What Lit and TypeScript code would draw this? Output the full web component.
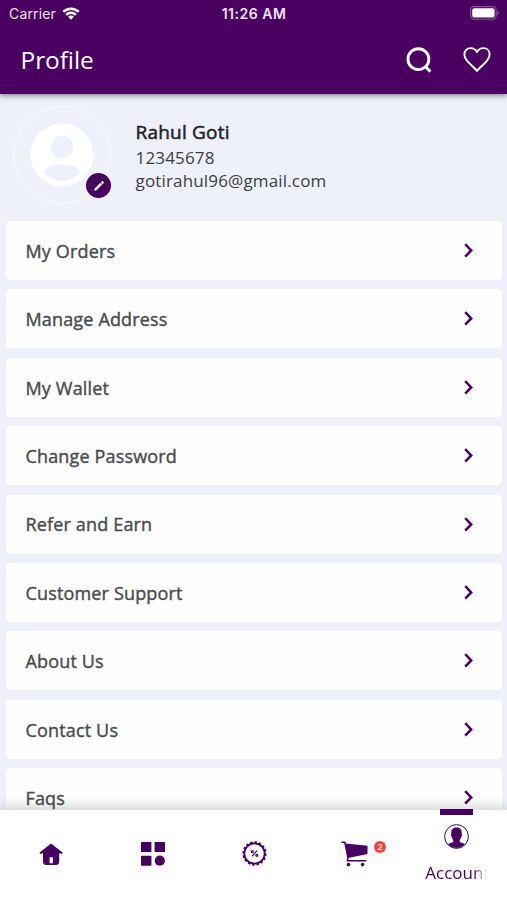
import { LitElement, html, css, svg } from "lit";
import { customElement, property } from "lit/decorators.js";

const icons = {
  wifi: svg`<path d="M0.4 4.9 A12.3 12.3 0 0 1 17.6 4.9 L15.8 6.8 A9.7 9.7 0 0 0 2.2 6.8Z"/><path d="M3.3 7.9 A8.2 8.2 0 0 1 14.7 7.9 L12.9 9.7 A5.6 5.6 0 0 0 5.1 9.7Z"/><path d="M6.1 10.8 A4.2 4.2 0 0 1 11.9 10.8 L9 13.8Z"/>`,
  battery: svg`<rect x="0.6" y="0.6" width="25.6" height="12.6" rx="3.6" fill="none" stroke="currentColor" stroke-opacity=".35" stroke-width="1.1"/><rect x="2.2" y="2.2" width="22.4" height="9.4" rx="2"/><path d="M27.6 4.8q2 2.1 0 4.2z" fill-opacity=".5"/>`,
  search: svg`<g fill="none" stroke="currentColor" stroke-width="2.9"><circle cx="12.4" cy="12.2" r="10.4"/><path d="M18.8 19 24.4 24.6"/></g>`,
  heart: svg`<path fill="none" stroke="currentColor" stroke-width="1.9" stroke-linejoin="round" d="M14 24C12.5 21.7 7.5 17.6 5 14.8C2.8 12.300 1.400 10.300 1.400 7.500C1.400 3.600 4 1.100 7.500 1.100C10.400 1.100 12.800 2.600 14 5.100C15.200 2.600 17.600 1.100 20.500 1.100C24 1.100 26.600 3.600 26.600 7.500C26.600 10.300 25.200 12.300 23 14.800C20.500 17.600 15.500 21.700 14 24Z"/>`,
  person: svg`<path fill-rule="evenodd" d="M32 0.5a31.5 31.5 0 1 0 0 63a31.5 31.5 0 1 0 0-63zM32 12.8a11.2 11.2 0 1 1 0 22.4a11.2 11.2 0 1 1 0-22.4zM14 49.5C17 38.5 47 38.5 50 49.5C41 60.5 23 60.5 14 49.5z"/>`,
  pencil: svg`<path fill="none" stroke="currentColor" stroke-width="2.500" d="M1.800 10.200 8.300 3.700M8.700 3.300 10.300 1.700"/>`,
  chevron: svg`<path fill="none" stroke="currentColor" stroke-width="2.500" d="M1.200 1.200 7.200 7.400 1.200 13.600"/>`,
  home: svg`<path fill-rule="evenodd" d="M12 0.500 23.800 9.700 23 11 20.200 10V18.500Q20.200 22 17 22H7.500Q4 22 4 18.500V10L1.200 11 0.400 9.700ZM10.600 14.200V20.200H13.900V14.200Z"/>`,
  grid: svg`<rect width="10.400" height="10" rx=".6"/><rect x="13.600" width="10.400" height="10" rx=".6"/><rect y="13.700" width="10.400" height="10" rx=".6"/><circle cx="18.800" cy="18.700" r="5.100"/>`,
  offer: svg`<circle cx="12.500" cy="12.500" r="10.200" fill="none" stroke="currentColor" stroke-width="1.800"/><circle cx="12.500" cy="12.500" r="11.200" fill="none" stroke="currentColor" stroke-width="1.900" pathLength="64" stroke-dasharray="2.200 1.800"/><path d="M10 15.300 15 9.700" stroke="currentColor" stroke-width="1.200"/><g fill="none" stroke="currentColor" stroke-width="1.200"><circle cx="10.300" cy="10.700" r="1"/><circle cx="14.800" cy="14.300" r="1"/></g>`,
  cart: svg`<path d="M4.300 2.500 26.500 4.700V13L7.200 17z"/><path fill="none" stroke="currentColor" stroke-width="1.600" stroke-linecap="round" stroke-linejoin="round" d="M1 1.200H3.800L7 16.500 6.300 19.800H24.600"/><circle cx="7.500" cy="23.600" r="1.800"/><circle cx="21.600" cy="23.600" r="1.800"/>`,
  account: svg`<circle cx="12.500" cy="12.500" r="11.900" fill="none" stroke="currentColor" stroke-width="1"/><path d="M12.500 3.600C16.600 3.600 18 5.800 17.700 10C18.300 10.400 17.900 12.900 17.100 13.100C16.800 14.700 16.300 15.600 15.700 16.200V18L21 20.100A11.400 11.400 0 0 1 4 20.100L9.300 18V16.200C8.700 15.600 8.200 14.700 7.900 13.100C7.100 12.900 6.700 10.400 7.300 10C7 5.800 8.400 3.600 12.500 3.600Z"/>`,
};

@customElement("ui-icon")
class UiIcon extends LitElement {
  @property() name: keyof typeof icons = "home";
  @property({ type: Number }) w = 24;
  @property({ type: Number }) h = 24;
  static styles = css`
    :host { display: block; flex: none; }
    svg { display: block; fill: currentColor; overflow: visible; }
  `;
  render() {
    return html`<svg width=${this.w} height=${this.h} viewBox="0 0 ${this.w} ${this.h}">${icons[this.name]}</svg>`;
  }
}

@customElement("menu-row")
class MenuRow extends LitElement {
  @property() label = "";
  static styles = css`
    :host {
      display: flex; flex: none; align-items: center; justify-content: space-between;
      box-sizing: border-box; height: 59px; padding: 0 29.5px 0 19.5px;
      background: #fefefe; border-radius: 4.5px; color: #494b4e;
    }
    .label { font-size: 18px; line-height: 26px; letter-spacing: .16px; -webkit-text-stroke: .4px currentColor; white-space: nowrap; padding-top: .6px; }
    .chevron { color: #470060; }
  `;
  render() {
    return html`<span class="label">${this.label}</span><ui-icon class="chevron" name="chevron" w="9" h="15"></ui-icon>`;
  }
}

@customElement("app-root")
class AppRoot extends LitElement {
  private entries = ["My Orders", "Manage Address", "My Wallet", "Change Password", "Refer and Earn", "Customer Support", "About Us", "Contact Us", "Faqs"];

  static styles = css`
    :host {
      display: flex; flex-direction: column; height: 900px; overflow: hidden;
      background: #eef1fa; font-family: "Open Sans", "Noto Sans", sans-serif;
    }
    .top { flex: none; height: 94px; background: #490061; color: #fff; box-shadow: 0 2px 5px rgba(40, 40, 60, .5); z-index: 1; }
    .status {
      display: grid; grid-template-columns: 1fr auto 1fr; align-items: center; height: 28px;
      padding: 0 7px 0 9px; font: 500 14px/28px Inter, sans-serif; color: #efe2f2;
    }
    .carrier { display: flex; align-items: center; gap: 6px; font-weight: 400; font-size: 14px; letter-spacing: .15px; }
    .wifi { color: #fff; margin-top: -2px; }
    .time { font-weight: 600; font-size: 14px; letter-spacing: .5px; margin-right: 1px; }
    .battery { justify-self: end; color: #fff; margin-top: -2px; }
    .bar { display: flex; align-items: center; height: 64px; padding: 0 16px 0 20.5px; }
    .title { flex: 1; font-size: 24.5px; line-height: 32px; letter-spacing: -.1px; }
    .search { margin-right: 31px; }
    .profile { display: flex; flex: none; height: 127px; box-sizing: border-box; padding: 12px 13px 0; }
    .avatar {
      position: relative; display: flex; align-items: center; justify-content: center;
      box-sizing: border-box; width: 98px; height: 98px; border: 1.5px solid #fafbfe; border-radius: 50%; color: #fff;
    }
    .edit {
      position: absolute; right: -1px; bottom: 5px; width: 25px; height: 25px; border-radius: 50%;
      background: #470060; display: flex; align-items: center; justify-content: center;
    }
    .details { margin-left: 24.5px; padding-top: 12.5px; font-size: 17px; letter-spacing: .16px; line-height: 23.3px; color: #3b3d43; }
    .name { font-size: 19px; line-height: 27px; letter-spacing: .2px; color: #202126; -webkit-text-stroke: .5px currentColor; }
    .list { flex: 1; min-height: 0; overflow: hidden; display: flex; flex-direction: column; gap: 9.4px; padding: 0 5px 0 6px; }
    .nav {
      position: relative; z-index: 2; flex: none; height: 90px; display: grid; grid-template-columns: repeat(5, 1fr);
      background: #fff; color: #470060; box-shadow: 0 -2px 12px rgba(0, 0, 0, .22);
    }
    .tab { position: relative; display: flex; align-items: center; justify-content: center; height: 87px; padding-left: 1.5px; }
    .basket { padding-left: 0; }
    .badge {
      position: absolute; left: 70px; top: 31px; width: 12px; height: 12px; border-radius: 50%;
      background: #f3453c; color: #fff; font-size: 9px; font-weight: 600; line-height: 12px; text-align: center;
    }
    .active { flex-direction: column; justify-content: flex-start; height: 90px; padding-left: 0; }
    .marker { width: 33px; height: 6px; margin-top: -1px; background: #470060; }
    .face { margin-top: 8.5px; }
    .caption {
      width: 62px; margin-top: 11.5px; overflow: hidden; white-space: nowrap; font-size: 17px; line-height: 26px; letter-spacing: 0;
      mask-image: linear-gradient(to right, #000 78%, transparent 100%);
    }
  `;

  render() {
    return html`
      <header class="top">
        <div class="status">
          <div class="carrier">Carrier<ui-icon class="wifi" name="wifi" w="18" h="14"></ui-icon></div>
          <div class="time">11:26 AM</div>
          <ui-icon class="battery" name="battery" w="30" h="14"></ui-icon>
        </div>
        <div class="bar">
          <div class="title">Profile</div>
          <ui-icon class="search" name="search" w="26" h="26"></ui-icon>
          <ui-icon name="heart" w="28" h="27"></ui-icon>
        </div>
      </header>
      <section class="profile">
        <div class="avatar">
          <ui-icon name="person" w="64" h="64"></ui-icon>
          <span class="edit"><ui-icon name="pencil" w="12" h="12"></ui-icon></span>
        </div>
        <div class="details">
          <div class="name">Rahul Goti</div>
          <div>12345678</div>
          <div>gotirahul96@gmail.com</div>
        </div>
      </section>
      <main class="list">${this.entries.map((e) => html`<menu-row label=${e}></menu-row>`)}</main>
      <nav class="nav">
        <div class="tab"><ui-icon name="home" w="24" h="22"></ui-icon></div>
        <div class="tab"><ui-icon name="grid" w="24" h="24"></ui-icon></div>
        <div class="tab"><ui-icon name="offer" w="25" h="25"></ui-icon></div>
        <div class="tab basket"><ui-icon name="cart" w="27" h="25"></ui-icon><span class="badge">2</span></div>
        <div class="tab active">
          <span class="marker"></span>
          <ui-icon class="face" name="account" w="25" h="25"></ui-icon>
          <span class="caption">Account</span>
        </div>
      </nav>
    `;
  }
}
